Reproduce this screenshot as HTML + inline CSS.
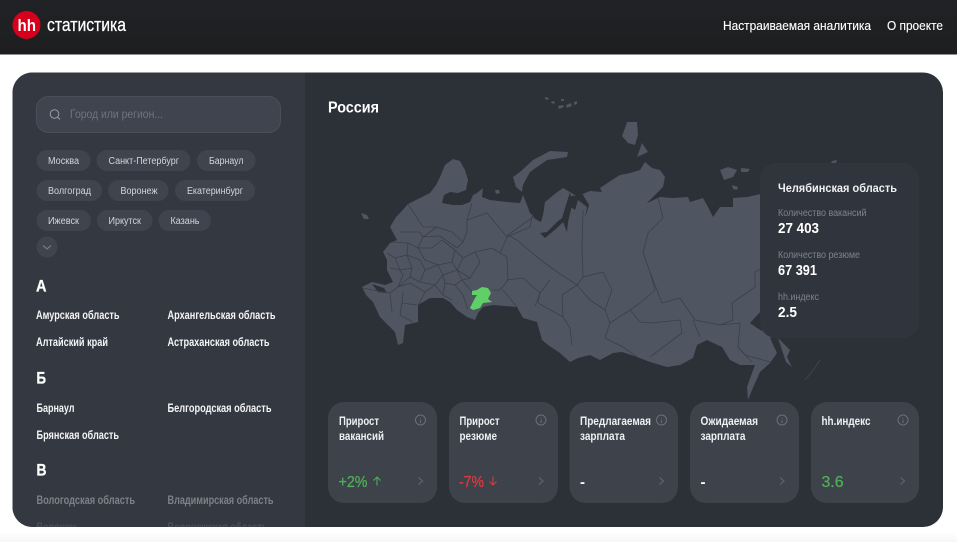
<!DOCTYPE html>
<html lang="ru">
<head>
<meta charset="utf-8">
<title>hh статистика</title>
<style>
html,body{margin:0;padding:0;background:#fff;width:957px;height:542px;overflow:hidden}
svg{display:block;font-family:"Liberation Sans",sans-serif}
.chip{font-size:10px;fill:#d3d5da}
.it{font-size:12px;font-weight:700;fill:#f4f5f6}
.dim{fill:#7d8289}
.faint{fill:#4b5058}
.h{font-size:17px;font-weight:700;fill:#fff;stroke:#fff;stroke-width:.3}
.ct{font-size:12px;font-weight:700;fill:#eef0f2}
.lb{font-size:10px;fill:#7f848c}
.v{font-size:15px;font-weight:700;fill:#fff}
.b{fill:none;stroke:#3b4049;stroke-width:.8;stroke-linejoin:round}
.ic{fill:none;stroke:#6a707a;stroke-width:1}
.ch{fill:none;stroke:#5c626c;stroke-width:1.2}
</style>
</head>
<body>
<svg width="957" height="542" viewBox="0 0 957 542" xmlns="http://www.w3.org/2000/svg">
<defs>
<linearGradient id="hd" x1="0" y1="0" x2="0" y2="1"><stop offset="0" stop-color="#212225"/><stop offset="1" stop-color="#1d1e20"/></linearGradient>
<linearGradient id="ft" x1="0" y1="0" x2="0" y2="1"><stop offset="0" stop-color="#fff"/><stop offset="1" stop-color="#f7f7f7"/></linearGradient>
<clipPath id="cc"><rect x="12.500" y="72.500" width="930.500" height="454.500" rx="20"/></clipPath>
</defs>

<!-- header -->
<rect width="957" height="54.500" fill="url(#hd)"/>
<circle cx="26.500" cy="25" r="14" fill="#d6001c"/>
<text x="17.500" y="31" font-size="17" font-weight="700" fill="#fff" textLength="18.500" lengthAdjust="spacingAndGlyphs">hh</text>
<text x="47" y="31" font-size="18" fill="#fff" stroke="#fff" stroke-width=".25" textLength="79" lengthAdjust="spacingAndGlyphs">статистика</text>
<text x="723" y="30" font-size="13" fill="#fff" stroke="#fff" stroke-width=".12" textLength="148" lengthAdjust="spacingAndGlyphs">Настраиваемая аналитика</text>
<text x="887" y="30" font-size="13" fill="#fff" stroke="#fff" stroke-width=".12" textLength="56" lengthAdjust="spacingAndGlyphs">О проекте</text>

<rect y="532" width="957" height="10" fill="url(#ft)"/>

<g clip-path="url(#cc)">
<rect x="12" y="72" width="931" height="455" fill="#2c3037"/>

<!-- map -->
<g fill="#4f5661">
<path d="M362 287L372 282 385 285 393 282 387 270 387 260 383 252 390 243 397 240 390 227 396 217 400 213 408 204 420 198 430 193 436 185 440 177 445 165 453 159 460 161 465 170 468 180 466 190 458 193 450 192 444 195 442 203 453 205 462 205 470 202 473 195 477 193 483 188 482 197 490 200 507 202 520 203 523 195 527 205 530 213 537 220 541 222 543 215 545 202 556 193 563 188 570 192 578 197 585 193 590 191 602 192 600 188 612 180 620 175 630 173 640 170 645 162 652 168 660 170 665 177 663 187 647 203 660 197 672 198 688 197 690 202 703 198 708 207 713 217 720 207 733 207 733 198 747 197 765 193 790 195 790 330 770 338 777 353 770 363 760 372 752 390 748 400 747 387 752 373 755 365 740 365 730 360 722 347 707 340 697 345 693 358 680 365 667 367 650 362 637 357 622 352 613 353 600 360 590 355 578 358 570 362 560 353 548 345 542 340 537 322 523 318 517 307 493 305 483 307 478 313 475 320 467 317 457 310 450 302 443 298 430 298 418 305 418 322 405 325 403 343 398 345 395 332 380 317 373 302 366 295 Z"/>
<path d="M513 177L520 172 533 160 550 151 568 152 567 157 547 160 530 172 523 185 522 192 516 187Z"/>
<path d="M627 122L637 122 638 135 635 145 628 143 622 136 625 128Z"/>
<path d="M642 143L648 152 637 157Z"/>
<path d="M361 213L367 215 369 219 364 219Z"/>
<path d="M720 170L728 167 737 170 733 177 724 180Z"/>
<path d="M741 168L750 169 748 172 741 172Z"/>
<path d="M732 185L738 187 737 190 733 189Z"/>
<path d="M832 161L837 160 836 163 831 163Z"/>
<path d="M778 338L790 350 787 357 792 367 786 362 782 350Z"/>
<path d="M545 97l4 1-1 2-3-1zM552 101l3 1-1 2-3-1zM558 106l5-1 1 2-5 2zM566 105l5-2 1 3-5 2zM574 102l3-1 0 3-3 1zM561 99l3 0 0 2-3 0z"/>
<path d="M495 190l4 0 1 3-4 1z"/>
</g>
<path d="M805 380L812 372 820 360" fill="none" stroke="#3f444d" stroke-width="1"/>
<!-- gulfs and dark water -->
<g fill="#2c3037">
<path d="M570 192L566 205 562 218 557 222 547 232 540 233 545 238 557 228 563 222 567 232 568 222 572 205Z"/>
<path d="M571 196L568 205 575 210 578 200 587 207 585 218 589 205 583 195Z"/>
<path d="M647 203L660 192 657 198Z"/>
<path d="M372 284L384 288 387 293 378 292Z"/>
<path d="M750 323L762 310 762 331 757 328Z"/>
</g>
<g class="b">
<!-- north -->
<path d="M408 204L423 227 437 227 452 232 463 242 467 232 467 220 472 203"/>
<path d="M467 220L487 213 507 237 530 227 533 213"/>
<path d="M508 235L517 240 537 257 557 272 577 285"/>
<path d="M500 253L508 235 533 217 537 220"/>
<path d="M583 210L582 247 583 277 577 285 562 295 563 317"/>
<path d="M550 280L540 293 538 303 563 317 570 328 572 345"/>
<path d="M507 280L523 278 540 293 535 306"/>
<path d="M503 290L517 307"/>
<path d="M475 252L492 248 500 253 507 257 508 280 500 290 492 290"/>
<path d="M463 258L475 252M470 278L475 270 480 262 475 252"/>
<!-- east -->
<path d="M658 197L663 218 648 233 643 253 650 272 655 290 640 303 630 310 610 323 605 338 623 347 637 357"/>
<path d="M650 272L662 303 680 298 688 310 695 320 720 325 733 320 732 303 755 287 755 272 762 268"/>
<path d="M630 310L640 322 652 323 680 320 682 333 650 357"/>
<path d="M693 320L700 337"/>
<path d="M720 325L740 323 738 347 752 362"/>
<path d="M738 347L745 355 770 362"/>
<path d="M577 285L590 300 605 310 610 323"/>
<path d="M583 277L603 272 612 290 605 310"/>
<!-- european lattice -->
<path d="M400 232L420 232 423 237 418 248M423 237L437 227M423 237L440 236 457 248 463 242"/>
<path d="M392 242L408 243 418 248 432 248 442 240 455 250 452 262 438 265 425 260 418 248"/>
<path d="M408 243L407 255 420 260 425 270 438 265"/>
<path d="M425 270L420 282 435 285 443 275 438 265"/>
<path d="M443 275L457 270 452 262"/>
<path d="M443 275L445 283 455 285 462 280 457 270 463 258 455 250"/>
<path d="M457 270L470 278 462 280"/>
<path d="M407 255L395 258 387 253"/>
<path d="M395 258L400 270 412 268 407 255"/>
<path d="M412 268L410 277 420 282"/>
<path d="M400 270L390 268"/>
<path d="M400 270L403 275 398 287 410 277"/>
<path d="M398 287L390 293 362 288"/>
<path d="M410 283L425 292 435 285"/>
<path d="M398 287L410 283"/>
<path d="M425 292L420 302 418 305"/>
<path d="M403 292L402 303 400 315 413 322"/>
<path d="M402 303L417 305"/>
<path d="M390 293L392 312"/>
<path d="M445 283L443 295 452 300"/>
<path d="M455 285L463 295 468 310"/>
<path d="M462 280L468 287 472 292"/>
<path d="M435 285L443 295"/>
</g>
<!-- selected region -->
<path d="M472 291L477 290 482 287 488 288 491 293 488 299 492 302 483 303 480 308 473 310 470 308 475 298 477 295 472 295Z" fill="#60cf68"/>

<!-- sidebar -->
<rect x="12" y="72" width="293" height="455" fill="#343840"/>
<rect x="36.500" y="96.500" width="244" height="36" rx="12" fill="#3f444e" stroke="#4a4f59"/>
<circle cx="54.500" cy="114" r="4.300" fill="none" stroke="#979ca4" stroke-width="1"/>
<path d="M57.700 117.200L60 119.500" stroke="#979ca4" fill="none"/>
<text x="70" y="118" font-size="12" fill="#6e7480" textLength="93" lengthAdjust="spacingAndGlyphs">Город или регион...</text>

<g fill="#3f444e">
<rect x="36.500" y="150" width="54" height="21" rx="10.500"/>
<rect x="96.500" y="150" width="94" height="21" rx="10.500"/>
<rect x="197" y="150" width="58.500" height="21" rx="10.500"/>
<rect x="36.500" y="180" width="65.500" height="21" rx="10.500"/>
<rect x="108" y="180" width="60.500" height="21" rx="10.500"/>
<rect x="175" y="180" width="80" height="21" rx="10.500"/>
<rect x="36.500" y="210" width="54.500" height="21" rx="10.500"/>
<rect x="97" y="210" width="55.500" height="21" rx="10.500"/>
<rect x="158.500" y="210" width="52.500" height="21" rx="10.500"/>
<circle cx="47" cy="247" r="10.500"/>
</g>
<path d="M43 245.500L47 249 51 245.500" fill="none" stroke="#747a84" stroke-width="1.200"/>
<text class="chip" x="48" y="164" textLength="31" lengthAdjust="spacingAndGlyphs">Москва</text>
<text class="chip" x="108.500" y="164" textLength="70.500" lengthAdjust="spacingAndGlyphs">Санкт-Петербург</text>
<text class="chip" x="209" y="164" textLength="34.500" lengthAdjust="spacingAndGlyphs">Барнаул</text>
<text class="chip" x="48" y="194" textLength="43" lengthAdjust="spacingAndGlyphs">Волгоград</text>
<text class="chip" x="120.500" y="194" textLength="37" lengthAdjust="spacingAndGlyphs">Воронеж</text>
<text class="chip" x="187" y="194" textLength="56" lengthAdjust="spacingAndGlyphs">Екатеринбург</text>
<text class="chip" x="48" y="224" textLength="31" lengthAdjust="spacingAndGlyphs">Ижевск</text>
<text class="chip" x="108.500" y="224" textLength="32.500" lengthAdjust="spacingAndGlyphs">Иркутск</text>
<text class="chip" x="170.500" y="224" textLength="29" lengthAdjust="spacingAndGlyphs">Казань</text>

<text class="h" x="36" y="291.500" textLength="10.500" lengthAdjust="spacingAndGlyphs">А</text>
<text class="it" x="36" y="319" textLength="83.500" lengthAdjust="spacingAndGlyphs">Амурская область</text>
<text class="it" x="167.500" y="319" textLength="108" lengthAdjust="spacingAndGlyphs">Архангельская область</text>
<text class="it" x="36" y="346" textLength="72" lengthAdjust="spacingAndGlyphs">Алтайский край</text>
<text class="it" x="167.500" y="346" textLength="102" lengthAdjust="spacingAndGlyphs">Астраханская область</text>
<text class="h" x="36.500" y="383.500" textLength="9.500" lengthAdjust="spacingAndGlyphs">Б</text>
<text class="it" x="36.500" y="412" textLength="38" lengthAdjust="spacingAndGlyphs">Барнаул</text>
<text class="it" x="167.500" y="412" textLength="104" lengthAdjust="spacingAndGlyphs">Белгородская область</text>
<text class="it" x="36.500" y="439" textLength="82.500" lengthAdjust="spacingAndGlyphs">Брянская область</text>
<text class="h" x="36.500" y="475.500" textLength="10" lengthAdjust="spacingAndGlyphs">В</text>
<text class="it dim" x="36.500" y="504" textLength="98.500" lengthAdjust="spacingAndGlyphs">Вологодская область</text>
<text class="it dim" x="167.500" y="504" textLength="106" lengthAdjust="spacingAndGlyphs">Владимирская область</text>
<text class="it faint" x="36.500" y="531" textLength="40" lengthAdjust="spacingAndGlyphs">Воронеж</text>
<text class="it faint" x="167.500" y="531" textLength="100" lengthAdjust="spacingAndGlyphs">Воронежская область</text>

<!-- main -->
<text x="328" y="112.500" font-size="16" font-weight="700" fill="#fff" textLength="51" lengthAdjust="spacingAndGlyphs">Россия</text>

<!-- tooltip -->
<rect x="760" y="163" width="159" height="175" rx="16" fill="#30343c"/>
<text class="ct" x="778" y="192" textLength="119" lengthAdjust="spacingAndGlyphs">Челябинская область</text>
<text class="lb" x="778" y="216" textLength="88.500" lengthAdjust="spacingAndGlyphs">Количество вакансий</text>
<text class="v" x="778" y="233" textLength="41" lengthAdjust="spacingAndGlyphs">27 403</text>
<text class="lb" x="778" y="258" textLength="82" lengthAdjust="spacingAndGlyphs">Количество резюме</text>
<text class="v" x="778" y="275" textLength="39" lengthAdjust="spacingAndGlyphs">67 391</text>
<text class="lb" x="778" y="300" textLength="41" lengthAdjust="spacingAndGlyphs">hh.индекс</text>
<text class="v" x="778" y="317" textLength="19" lengthAdjust="spacingAndGlyphs">2.5</text>

<!-- metric cards -->
<g fill="#3d424b">
<rect x="328" y="402" width="109" height="101" rx="16"/>
<rect x="449" y="402" width="109" height="101" rx="16"/>
<rect x="569.500" y="402" width="108.500" height="101" rx="16"/>
<rect x="690" y="402" width="109" height="101" rx="16"/>
<rect x="811" y="402" width="108" height="101" rx="16"/>
</g>
<text class="ct" x="339" y="425" textLength="40" lengthAdjust="spacingAndGlyphs">Прирост</text>
<text class="ct" x="339" y="440" textLength="45" lengthAdjust="spacingAndGlyphs">вакансий</text>
<text class="ct" x="459.500" y="425" textLength="40" lengthAdjust="spacingAndGlyphs">Прирост</text>
<text class="ct" x="459.500" y="440" textLength="37.500" lengthAdjust="spacingAndGlyphs">резюме</text>
<text class="ct" x="580" y="425" textLength="71" lengthAdjust="spacingAndGlyphs">Предлагаемая</text>
<text class="ct" x="580" y="440" textLength="45" lengthAdjust="spacingAndGlyphs">зарплата</text>
<text class="ct" x="700.500" y="425" textLength="57.500" lengthAdjust="spacingAndGlyphs">Ожидаемая</text>
<text class="ct" x="700.500" y="440" textLength="45" lengthAdjust="spacingAndGlyphs">зарплата</text>
<text class="ct" x="821.500" y="425" textLength="49" lengthAdjust="spacingAndGlyphs">hh.индекс</text>

<g class="ic">
<circle cx="420.500" cy="420" r="5"/><path d="M420.500 418v.8M420.500 420v3"/>
<circle cx="541" cy="420" r="5"/><path d="M541 418v.8M541 420v3"/>
<circle cx="661.500" cy="420" r="5"/><path d="M661.500 418v.8M661.500 420v3"/>
<circle cx="782" cy="420" r="5"/><path d="M782 418v.8M782 420v3"/>
<circle cx="903" cy="420" r="5"/><path d="M903 418v.8M903 420v3"/>
</g>
<g class="ch">
<path d="M418.500 477.500L422.500 481 418.500 484.500"/>
<path d="M539 477.500L543 481 539 484.500"/>
<path d="M659.500 477.500L663.500 481 659.500 484.500"/>
<path d="M780 477.500L784 481 780 484.500"/>
<path d="M900.500 477.500L904.500 481 900.500 484.500"/>
</g>
<text x="338.500" y="487" font-size="16" fill="#4fae56" stroke="#4fae56" stroke-width=".3" textLength="29" lengthAdjust="spacingAndGlyphs">+2%</text>
<path d="M377 485.500V477M373.500 480.500L377 477 380.500 480.500" fill="none" stroke="#4fae56" stroke-width="1.100"/>
<text x="459" y="487" font-size="16" fill="#d83a42" stroke="#d83a42" stroke-width=".3" textLength="25" lengthAdjust="spacingAndGlyphs">-7%</text>
<path d="M493 476.500V485M489.500 481.500L493 485 496.500 481.500" fill="none" stroke="#d83a42" stroke-width="1.100"/>
<text x="580" y="487" font-size="15" font-weight="700" fill="#fff">-</text>
<text x="700.500" y="487" font-size="15" font-weight="700" fill="#fff">-</text>
<text x="821.500" y="487" font-size="16" fill="#4fae56" stroke="#4fae56" stroke-width=".3" textLength="22" lengthAdjust="spacingAndGlyphs">3.6</text>
</g>
</svg>
</body>
</html>
